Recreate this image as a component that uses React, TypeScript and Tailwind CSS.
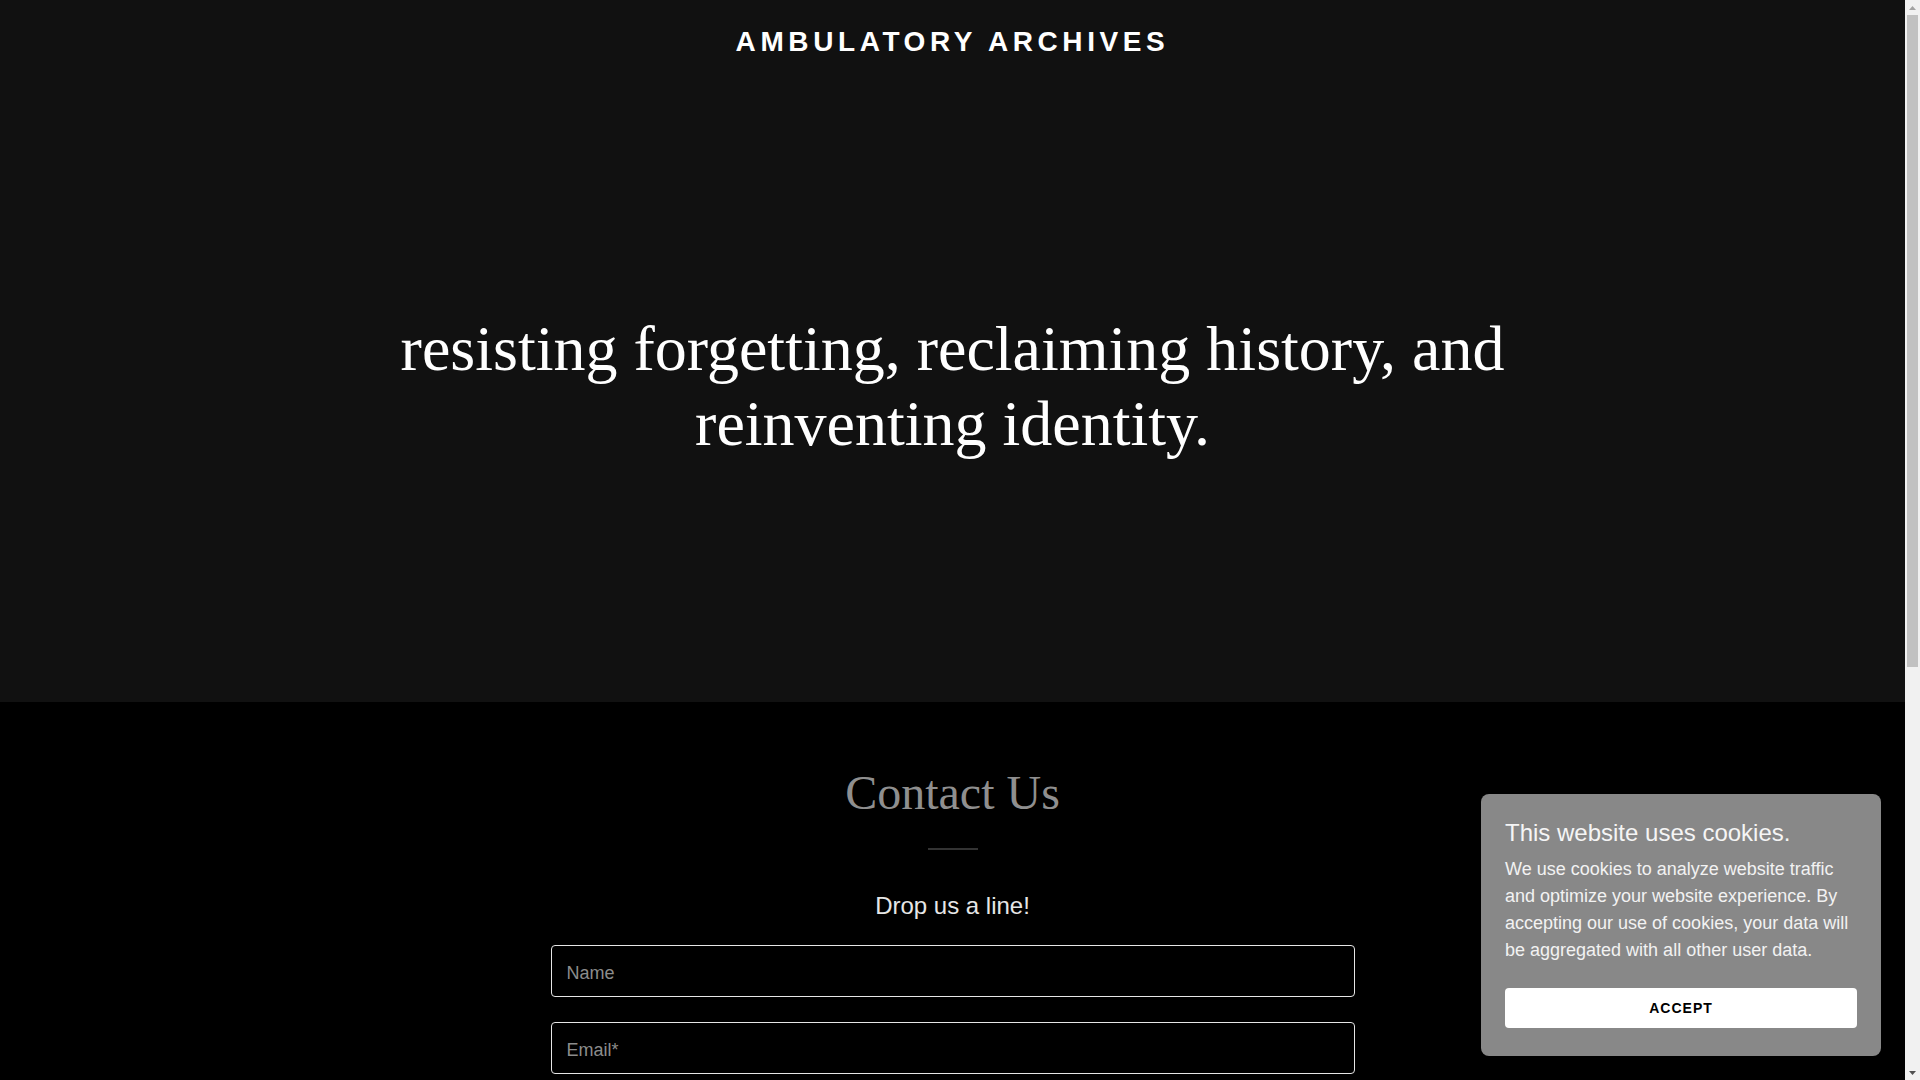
import React from "react";

const sans = { fontFamily: '"Liberation Sans", Arial, sans-serif' };

function FakeScrollbar() {
  return (
    <div className="fixed top-0 right-0 z-50 flex h-screen w-[15px] flex-col items-center bg-[#f1f1f1]">
      <div className="flex h-[15px] w-full items-center justify-center">
        <svg width="7" height="4" viewBox="0 0 7 4">
          <polygon points="3.5,0 7,4 0,4" fill="#a3a3a3" />
        </svg>
      </div>
      <div className="h-[652px] w-[11px] bg-[#c1c1c1]" />
      <div className="flex-1" />
      <div className="flex h-[15px] w-full items-center justify-center">
        <svg width="7" height="4" viewBox="0 0 7 4">
          <polygon points="0,0 7,0 3.5,4" fill="#505050" />
        </svg>
      </div>
    </div>
  );
}

export default function App() {
  return (
    <div className="min-h-screen bg-black" style={sans}>
      <div className="mr-[15px]">
        {/* Hero */}
        <section className="bg-[#111111] pt-[24px] pb-[241px]">
          <div className="text-center text-white font-bold text-[28px] leading-[35px] tracking-[4.6px] font-['Liberation_Sans',Arial,sans-serif]">
            AMBULATORY ARCHIVES
          </div>
          <h1 className="mx-auto mt-[252px] max-w-[1200px] text-center text-white text-[64px] leading-[75px] font-normal font-['Liberation_Serif','Times_New_Roman',serif]">
            resisting forgetting, reclaiming history, and reinventing identity.
          </h1>
        </section>

        {/* Contact */}
        <section className="bg-black pt-[61px] pb-[120px]">
          <h2 className="text-center text-[#8f8f8f] text-[48px] leading-[60px] font-normal font-['Liberation_Serif','Times_New_Roman',serif]">
            Contact Us
          </h2>
          <div className="mx-auto mt-[25px] h-[2px] w-[50px] bg-[#333333]" />
          <p className="mt-[41px] text-center text-[#e6e6e6] text-[24px] leading-[30px]">
            Drop us a line!
          </p>
          <form className="mx-auto mt-[24px] flex w-[804px] flex-col gap-[25px]">
            <input
              placeholder="Name"
              className="h-[52px] w-full rounded-[4px] border border-[#e6e6e6] bg-black px-[15px] pt-[4px] text-[18px] text-white placeholder:text-[#8c8c8c] outline-none"
            />
            <input
              placeholder="Email*"
              className="h-[52px] w-full rounded-[4px] border border-[#e6e6e6] bg-black px-[15px] pt-[4px] text-[18px] text-white placeholder:text-[#8c8c8c] outline-none"
            />
            <textarea
              placeholder="Message"
              className="h-[120px] w-full resize-none rounded-[4px] border border-[#e6e6e6] bg-black px-[15px] pt-[14px] text-[18px] text-white placeholder:text-[#8c8c8c] outline-none"
            />
            <p className="text-center text-[13px] text-[#8c8c8c]">
              This site is protected by reCAPTCHA and the Google Privacy Policy and Terms of Service apply.
            </p>
            <button
              type="button"
              className="h-[48px] w-full rounded-[4px] bg-white text-[14px] font-bold tracking-[1px] text-black"
            >
              SEND
            </button>
          </form>
        </section>

        {/* Footer */}
        <footer className="bg-[#111111] py-[56px] text-center">
          <p className="text-[14px] leading-[24px] text-[#a3a3a3]">
            Copyright © 2024 Ambulatory Archives - All Rights Reserved.
          </p>
          <p className="mt-[24px] text-[14px] leading-[24px] text-[#a3a3a3]">
            Powered by GoDaddy
          </p>
        </footer>
      </div>

      {/* Cookie banner */}
      <div className="fixed bottom-6 right-[39px] w-[400px] rounded-[8px] bg-[#888888] px-6 pt-6 pb-[28px]">
        <h3 className="text-[24px] leading-[30px] text-[#f5f5f5] font-normal">
          This website uses cookies.
        </h3>
        <p className="mt-2 text-[18px] leading-[27px] text-[#f2f2f2]">
          We use cookies to analyze website traffic and optimize your website experience. By accepting our use of cookies, your data will be aggregated with all other user data.
        </p>
        <button
          type="button"
          className="mt-6 flex h-[40px] w-full items-center justify-center rounded-[4px] bg-white text-[14px] font-bold tracking-[1px] text-black"
        >
          ACCEPT
        </button>
      </div>

      <FakeScrollbar />
    </div>
  );
}
